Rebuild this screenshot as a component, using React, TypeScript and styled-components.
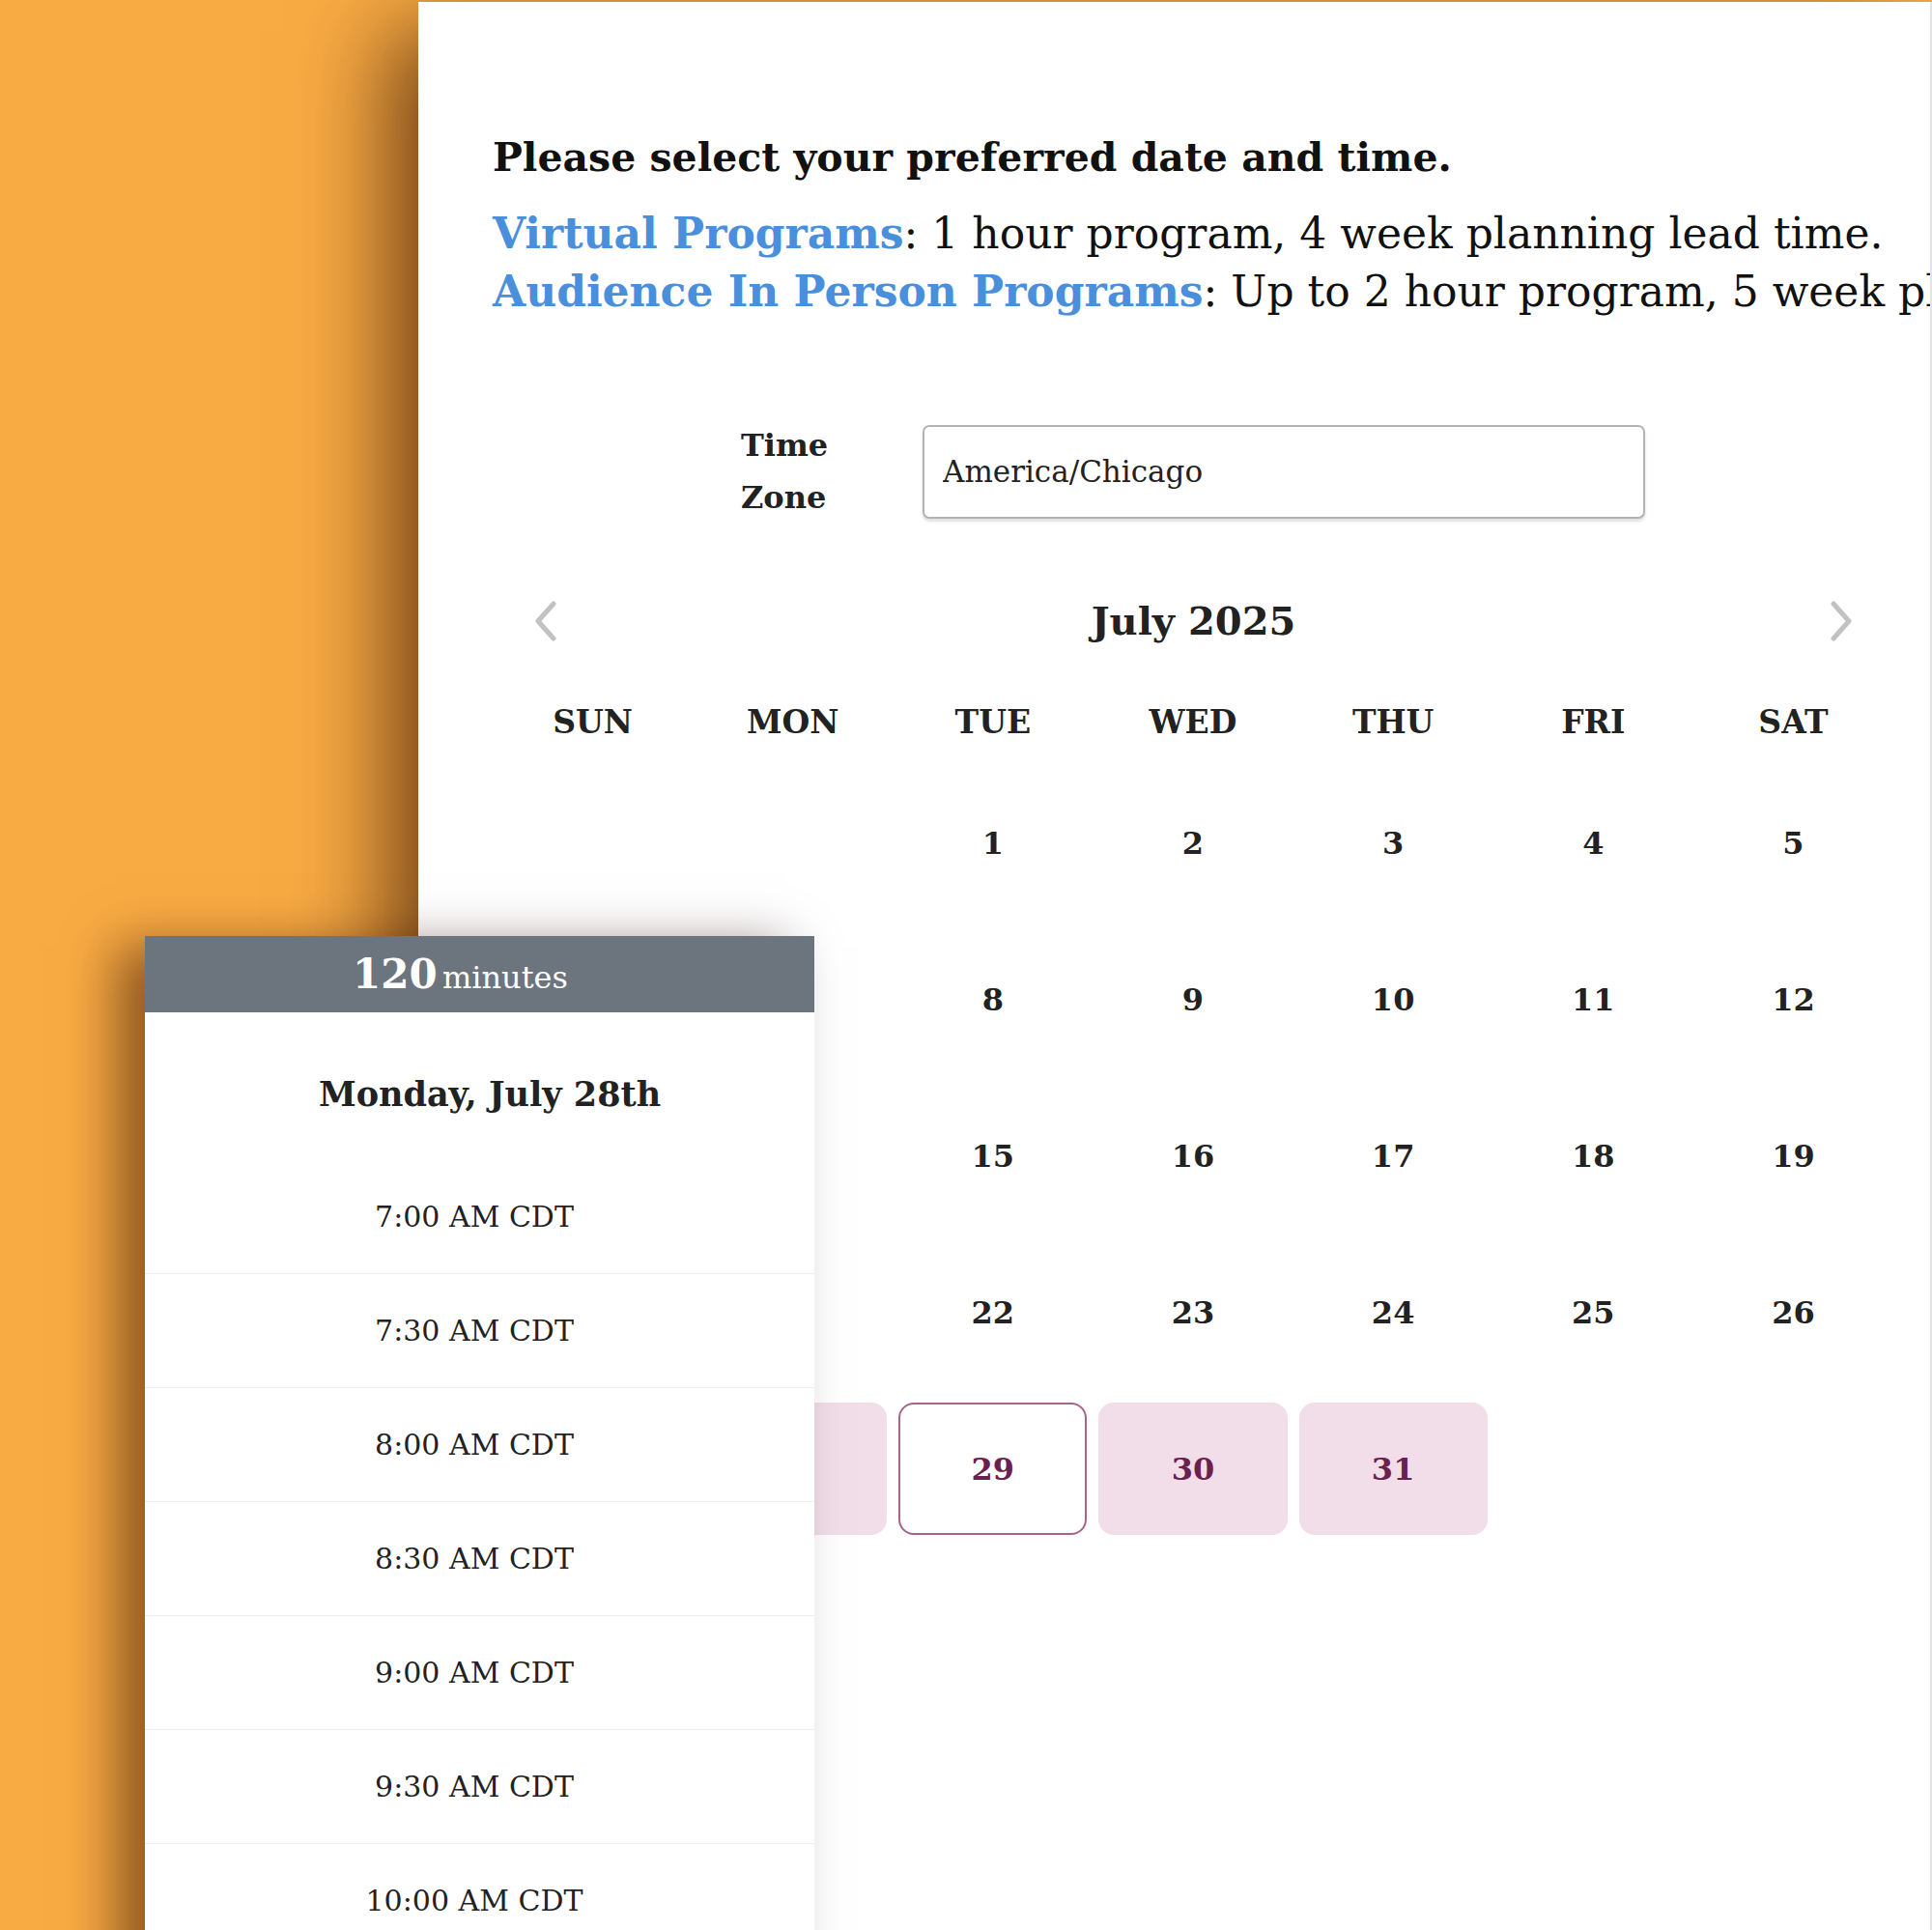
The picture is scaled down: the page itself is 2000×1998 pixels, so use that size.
import React from "react";
import styled, { createGlobalStyle } from "styled-components";

const GlobalStyle = createGlobalStyle`
  html, body { margin: 0; padding: 0; }
  body {
    font-family: "DejaVu Serif", "Liberation Serif", serif;
    background: #f9ab43;
  }
  * { box-sizing: border-box; }
`;

const Page = styled.div`
  position: relative;
  width: 2000px;
  height: 1998px;
  overflow: hidden;
  background: #f9ab43;
  display: flex;
  padding: 2px 0 0 433px;
`;

const Panel = styled.main`
  flex: 1;
  background: #fff;
  border-right: 2px solid #e4e4e4;
  box-shadow: -30px 30px 90px rgba(40, 10, 0, 0.65);
  overflow: hidden;
  padding: 137px 0 0 77px;
`;

const Heading = styled.h1`
  margin: 0;
  font-size: 41px;
  line-height: 48px;
  font-weight: 700;
  color: #111;
  white-space: nowrap;
`;

const Info = styled.div`
  margin-top: 25px;
`;

const InfoLine = styled.p`
  margin: 0;
  font-size: 44px;
  line-height: 60px;
  white-space: nowrap;
  color: #111;
`;

const ProgramName = styled.span`
  color: #4a8fdb;
  font-weight: 700;
`;

const TzRow = styled.div`
  display: flex;
  align-items: center;
  margin-top: 102px;
  padding-left: 257px;
`;

const TzLabel = styled.label`
  width: 188px;
  font-size: 32px;
  font-weight: 700;
  line-height: 54px;
  color: #222;
`;

const TzInput = styled.input`
  width: 748px;
  height: 97px;
  border: 2px solid #b3b3b3;
  border-radius: 7px;
  box-shadow: 0 3px 3px rgba(0, 0, 0, 0.12);
  padding: 0 0 0 19px;
  font-family: inherit;
  font-size: 31px;
  color: #222;
  background: #fff;
  outline: none;
`;

const Calendar = styled.section`
  width: 1438px;
  margin-left: 6px;
`;

const CalNav = styled.div`
  margin-top: 71px;
  height: 60px;
  display: flex;
  align-items: center;
  justify-content: space-between;
  padding: 0 36px 0 37px;
`;

const NavButton = styled.button`
  width: 24px;
  height: 42px;
  padding: 0;
  border: none;
  background: none;
  display: flex;
  align-items: center;
  justify-content: center;
`;

const MonthTitle = styled.h2`
  margin: 0;
  font-size: 40px;
  line-height: 60px;
  font-weight: 700;
  color: #222;
`;

const WeekRow = styled.div`
  margin-top: 49px;
  display: grid;
  grid-template-columns: repeat(7, 1fr);
  column-gap: 12px;
  height: 50px;
  align-items: center;
`;

const WeekDay = styled.div`
  text-align: center;
  font-size: 33px;
  font-weight: 700;
  color: #222;
`;

const DateGrid = styled.div`
  margin-top: 32px;
  display: grid;
  grid-template-columns: repeat(7, 1fr);
  grid-auto-rows: 137px;
  column-gap: 12px;
  row-gap: 25px;
`;

type CellKind = "empty" | "plain" | "available" | "selected";

const DateCell = styled.div<{ $kind: CellKind }>`
  display: flex;
  align-items: center;
  justify-content: center;
  border-radius: 16px;
  font-size: 32px;
  font-weight: 700;
  color: ${(p) => (p.$kind === "available" || p.$kind === "selected" ? "#6b2150" : "#222")};
  background: ${(p) => (p.$kind === "available" ? "#f1dee8" : "transparent")};
  border: 2px solid ${(p) => (p.$kind === "selected" ? "#a8628c" : "transparent")};
`;

const Popup = styled.aside`
  position: absolute;
  left: 150px;
  top: 969px;
  width: 693px;
  height: 1200px;
  background: #fff;
  box-shadow: -30px 10px 50px rgba(40, 10, 0, 0.5);
`;

const PopupHeader = styled.div`
  height: 79px;
  line-height: 79px;
  background: #6c757d;
  color: #fff;
  text-align: center;
  padding-right: 40px;
  white-space: nowrap;
`;

const Duration = styled.span`
  font-size: 42px;
  font-weight: 700;
`;

const DurationUnit = styled.span`
  font-size: 32px;
`;

const DayTitle = styled.h3`
  margin: 0;
  padding: 61px 0 44px 21px;
  font-size: 35px;
  line-height: 48px;
  font-weight: 700;
  text-align: center;
  color: #222;
`;

const Slot = styled.div`
  height: 118px;
  border-bottom: 1px solid #eeeeee;
  display: flex;
  align-items: center;
  justify-content: center;
  padding-right: 11px;
  font-size: 30px;
  color: #222;
`;

const Chevron = ({ dir }: { dir: "left" | "right" }) => (
  <svg width="24" height="42" viewBox="0 0 24 42" fill="none">
    <path
      d={dir === "left" ? "M20 3 L4 21 L20 39" : "M4 3 L20 21 L4 39"}
      stroke="#c2c2c2"
      strokeWidth="5"
      strokeLinecap="round"
      strokeLinejoin="round"
    />
  </svg>
);

const weekdays = ["SUN", "MON", "TUE", "WED", "THU", "FRI", "SAT"];

const cells: { day: number | null; kind: CellKind }[] = [
  { day: null, kind: "empty" },
  { day: null, kind: "empty" },
  ...Array.from({ length: 26 }, (_, i) => ({ day: i + 1, kind: "plain" as CellKind })),
  { day: 27, kind: "plain" },
  { day: 28, kind: "available" },
  { day: 29, kind: "selected" },
  { day: 30, kind: "available" },
  { day: 31, kind: "available" },
];

const slots = [
  "7:00 AM CDT",
  "7:30 AM CDT",
  "8:00 AM CDT",
  "8:30 AM CDT",
  "9:00 AM CDT",
  "9:30 AM CDT",
  "10:00 AM CDT",
];

export default function App() {
  return (
    <>
      <GlobalStyle />
      <Page>
        <Panel>
          <Heading>Please select your preferred date and time.</Heading>
          <Info>
            <InfoLine>
              <ProgramName>Virtual Programs</ProgramName>: 1 hour program, 4 week planning lead time.
            </InfoLine>
            <InfoLine>
              <ProgramName>Audience In Person Programs</ProgramName>: Up to 2 hour program, 5 week planning lead time.
            </InfoLine>
          </Info>
          <TzRow>
            <TzLabel>
              Time
              <br />
              Zone
            </TzLabel>
            <TzInput readOnly value="America/Chicago" />
          </TzRow>
          <Calendar>
            <CalNav>
              <NavButton aria-label="Previous month">
                <Chevron dir="left" />
              </NavButton>
              <MonthTitle>July 2025</MonthTitle>
              <NavButton aria-label="Next month">
                <Chevron dir="right" />
              </NavButton>
            </CalNav>
            <WeekRow>
              {weekdays.map((d) => (
                <WeekDay key={d}>{d}</WeekDay>
              ))}
            </WeekRow>
            <DateGrid>
              {cells.map((c, i) => (
                <DateCell key={i} $kind={c.kind}>
                  {c.day ?? ""}
                </DateCell>
              ))}
            </DateGrid>
          </Calendar>
        </Panel>
        <Popup>
          <PopupHeader>
            <Duration>120</Duration> <DurationUnit>minutes</DurationUnit>
          </PopupHeader>
          <DayTitle>Monday, July 28th</DayTitle>
          {slots.map((s) => (
            <Slot key={s}>{s}</Slot>
          ))}
        </Popup>
      </Page>
    </>
  );
}
